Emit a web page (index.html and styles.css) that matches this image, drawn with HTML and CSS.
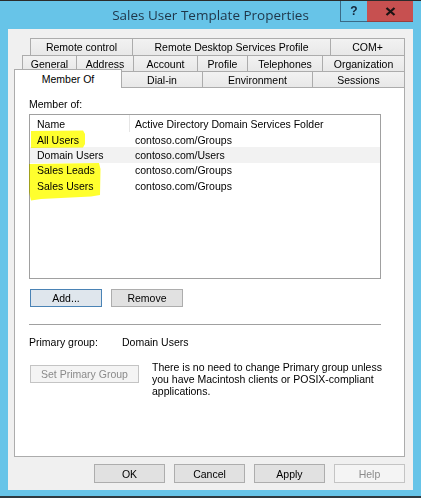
FILE: index.html
```html
<!DOCTYPE html>
<html>
<head>
<meta charset="utf-8">
<link rel="stylesheet" href="styles.css">
</head>
<body>
<div class="window">
  <div class="titlebar">
    <div></div>
    <div class="title">Sales User Template Properties</div>
    <div class="caps">
      <div class="cap-help">?</div>
      <div class="cap-close">
        <svg width="11" height="9" viewBox="0 0 11 9"><path d="M1.5 1 L9.5 8 M9.5 1 L1.5 8" stroke="#1c1414" stroke-width="2.3" fill="none"/></svg>
      </div>
    </div>
  </div>
  <div class="client">
    <div class="tabs">
      <div class="tabrow r1">
        <div class="tab w-rc">Remote control</div>
        <div class="tab w-rds">Remote Desktop Services Profile</div>
        <div class="tab fill">COM+</div>
      </div>
      <div class="tabrow r2">
        <div class="tab w-gen">General</div>
        <div class="tab w-addr">Address</div>
        <div class="tab w-acct">Account</div>
        <div class="tab w-prof">Profile</div>
        <div class="tab w-tel">Telephones</div>
        <div class="tab fill">Organization</div>
      </div>
      <div class="tabrow r3">
        <div class="tab sel w-mo">Member Of</div>
        <div class="tab w-dial">Dial-in</div>
        <div class="tab w-env">Environment</div>
        <div class="tab fill">Sessions</div>
      </div>
    </div>
    <div class="panel">
      <div class="label">Member of:</div>
      <div class="list">
        <div class="lrow lhead"><div class="c1">Name</div><div class="c2">Active Directory Domain Services Folder</div></div>
        <div class="lrow"><div class="c1">All Users</div><div class="c2">contoso.com/Groups</div></div>
        <div class="lrow alt"><div class="c1">Domain Users</div><div class="c2">contoso.com/Users</div></div>
        <div class="lrow"><div class="c1">Sales Leads</div><div class="c2">contoso.com/Groups</div></div>
        <div class="lrow"><div class="c1">Sales Users</div><div class="c2">contoso.com/Groups</div></div>
        <svg class="marker" width="110" height="100" viewBox="0 0 110 100">
          <path d="M2 17 L54 16.5 L56 20 L56 30 L54 33.5 L2 34 Z" fill="#ffff2e"/>
          <path d="M0 50 L70 49 L71.5 55 L71 81 L62 82.5 L32 84 L12 85 L2 86.5 L0 78 Z" fill="#ffff2e"/>
        </svg>
      </div>
      <div class="btnrow">
        <button class="btn focus">Add...</button>
        <button class="btn">Remove</button>
      </div>
      <div class="sep"></div>
      <div class="pg"><span class="pg-label">Primary group:</span><span>Domain Users</span></div>
      <div class="setrow">
        <button class="btn disabled wide">Set Primary Group</button>
        <p class="note">There is no need to change Primary group unless<br>you have Macintosh clients or POSIX-compliant<br>applications.</p>
      </div>
    </div>
    <div class="footer">
      <button class="btn fbtn">OK</button>
      <button class="btn fbtn">Cancel</button>
      <button class="btn fbtn">Apply</button>
      <button class="btn fbtn disabled">Help</button>
    </div>
  </div>
</div>
</body>
</html>
```
FILE: styles.css
```css
body {
  margin: 0;
  font-family: "Liberation Sans", Arial, sans-serif;
  font-size: 10.5px;
  color: #000;
}
.window {
  width: 421px;
  height: 498px;
  box-sizing: border-box;
  background: #67c4e8;
  border-top: 1px solid #2b2b2b;
  border-bottom: 2px solid #2f3a40;
  display: flex;
  flex-direction: column;
}
.titlebar {
  height: 28px;
  flex: none;
  display: grid;
  grid-template-columns: 1fr auto 1fr;
}
.title {
  font-family: "Open Sans", "Liberation Sans", sans-serif;
  font-size: 13.5px;
  color: #1f3548;
  align-self: center;
  padding-bottom: 1px;
}
.caps {
  justify-self: end;
  align-self: start;
  display: flex;
  height: 21px;
  margin-right: 8px;
}
.cap-help {
  width: 27px;
  box-sizing: border-box;
  border: 1px solid #3a6a86;
  border-top: none;
  border-right: none;
  display: flex;
  align-items: center;
  justify-content: center;
  font-weight: bold;
  font-size: 12px;
  color: #13263a;
}
.cap-close {
  width: 46px;
  box-sizing: border-box;
  background: #c75050;
  border-bottom: 1px solid #9a3e3e;
  display: flex;
  align-items: center;
  justify-content: center;
}
.client {
  height: 461px;
  flex: none;
  margin: 0 8px;
  box-sizing: border-box;
  background: #f0f0f0;
  padding: 9px 8px 0 6px;
}
.tabrow {
  display: flex;
}
.r1 { height: 17px; margin-left: 16px; }
.r2 { height: 16px; margin-left: 8px; }
.r3 { height: 16px; }
.tab {
  box-sizing: border-box;
  height: 100%;
  border: 1px solid #acacac;
  border-bottom: none;
  background: linear-gradient(#f2f2f2, #e8e8e8);
  display: flex;
  align-items: center;
  justify-content: center;
  white-space: nowrap;
  margin-left: -1px;
  flex: none;
}
.tab:first-child { margin-left: 0; }
.tab.fill { flex: 1; }
.tab.sel {
  position: relative;
  z-index: 2;
  height: 19px;
  margin-top: -2px;
  background: #fff;
}
.w-rc { width: 103px; }
.w-rds { width: 199px; }
.w-gen { width: 55px; }
.w-addr { width: 58px; }
.w-acct { width: 65px; }
.w-prof { width: 51px; }
.w-tel { width: 76px; }
.w-mo { width: 108px; }
.w-dial { width: 82px; }
.w-env { width: 111px; }
.panel {
  height: 370px;
  box-sizing: border-box;
  background: #fff;
  border: 1px solid #acacac;
  padding: 10px 0 0 14px;
}
.label {
  line-height: 13px;
}
.list {
  position: relative;
  width: 352px;
  height: 165px;
  box-sizing: border-box;
  border: 1px solid #a0a0a0;
  margin-top: 3px;
}
.lrow {
  display: flex;
  height: 15.4px;
  align-items: center;
  white-space: nowrap;
}
.lhead { height: 17px; }
.alt { background: #f2f2f2; }
.c1 {
  width: 100px;
  box-sizing: border-box;
  padding-left: 7px;
}
.c2 { padding-left: 5px; }
.lhead .c1 {
  height: 100%;
  display: flex;
  align-items: center;
  border-right: 1px solid #e5e5e5;
}
.marker {
  position: absolute;
  left: -1px;
  top: -1px;
  mix-blend-mode: multiply;
  pointer-events: none;
}
.btn {
  box-sizing: border-box;
  height: 18px;
  border: 1px solid #adadad;
  background: #e1e1e1;
  font-family: inherit;
  font-size: inherit;
  color: #000;
  padding: 0;
  margin: 0;
}
.btn.focus {
  border-color: #4a83b5;
  background: #dfe6ed;
}
.btn.disabled {
  border-color: #c4c4c4;
  background: #f4f4f4;
  color: #8a8a8a;
}
.btnrow {
  display: flex;
  gap: 9px;
  margin-top: 10px;
  padding-left: 1px;
}
.btnrow .btn { width: 72px; }
.sep {
  width: 352px;
  height: 1px;
  background: #a0a0a0;
  margin-top: 17px;
}
.pg {
  display: flex;
  margin-top: 11px;
  line-height: 13px;
}
.pg-label { width: 93px; }
.setrow {
  display: flex;
  align-items: flex-start;
  margin-top: 16px;
}
.btn.wide {
  width: 109px;
  margin-left: 1px;
  flex: none;
}
.note {
  margin: -3px 0 0 13px;
  line-height: 11.8px;
  white-space: nowrap;
}
.footer {
  display: flex;
  justify-content: flex-end;
  gap: 9px;
  margin-top: 7px;
}
.fbtn {
  width: 71px;
  height: 19px;
}
```
